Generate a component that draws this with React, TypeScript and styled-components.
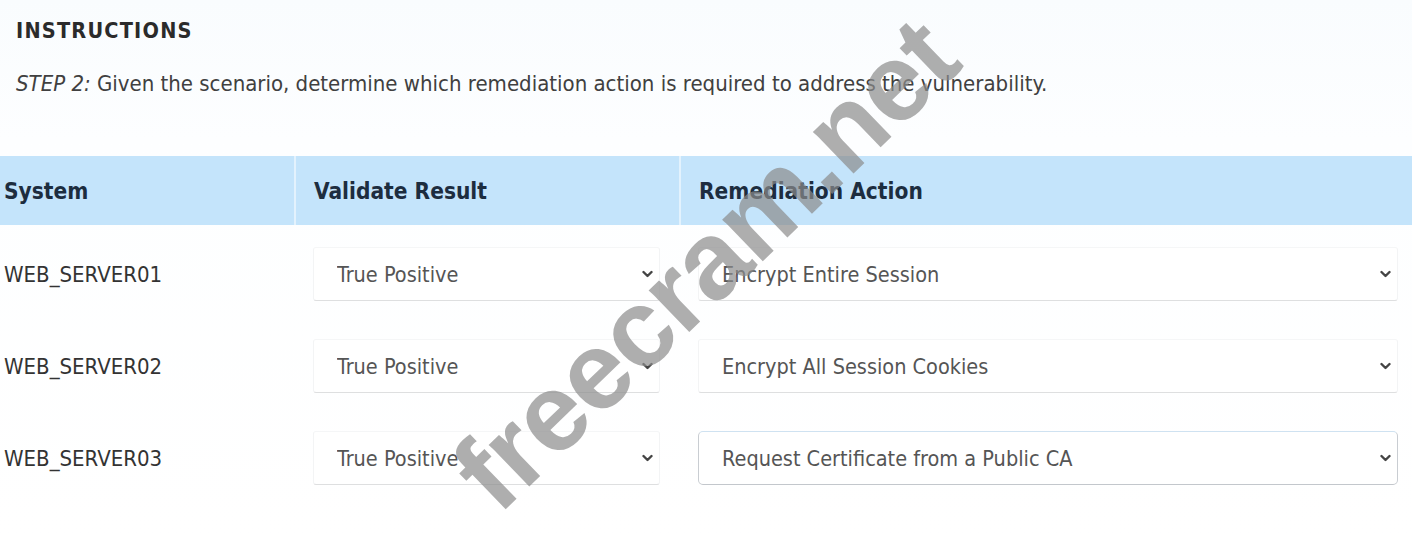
import React from "react";
import styled, { createGlobalStyle } from "styled-components";

const GlobalStyle = createGlobalStyle`
  html, body {
    margin: 0;
    padding: 0;
    background: #fcfdfe;
  }
  body {
    font-family: "DejaVu Sans Condensed", "Liberation Sans Narrow", "Liberation Sans", sans-serif;
    color: #333;
  }
  * { box-sizing: border-box; }
`;

const Page = styled.div`
  position: relative;
  width: 1412px;
  height: 538px;
  overflow: hidden;
  background: linear-gradient(#f9fcfe, #fdfeff 140px, #ffffff);
`;

const Instructions = styled.section`
  padding: 19px 16px 0 16px;
  display: flex;
  flex-direction: column;
  gap: 28px;
`;

const Title = styled.h1`
  margin: 0;
  font-size: 21.5px;
  font-weight: bold;
  line-height: 24px;
  color: #2b2b2b;
  letter-spacing: 1.2px;
`;

const StepText = styled.p`
  margin: 0;
  font-size: 22px;
  line-height: 26px;
  color: #404040;
  em {
    font-style: italic;
  }
`;

const Table = styled.div`
  margin-top: 59px;
  display: grid;
  grid-template-columns: 294px 385px 1fr;
`;

const HeaderCell = styled.div<{ $first?: boolean }>`
  height: 69px;
  background: #c4e4fb;
  display: flex;
  align-items: center;
  padding-left: ${(p) => (p.$first ? "4px" : "18px")};
  border-left: ${(p) => (p.$first ? "none" : "2px solid #e3f2fd")};
  font-weight: bold;
  font-size: 22.5px;
  color: #1d2d3f;
`;

const Cell = styled.div<{ $first?: boolean; $right?: number }>`
  height: 92px;
  display: flex;
  align-items: center;
  padding-top: 6px;
  padding-left: ${(p) => (p.$first ? "4px" : "19px")};
  padding-right: ${(p) => (p.$right ?? 19)}px;
  font-size: 22px;
  color: #333;
`;

const SelectWrap = styled.div`
  position: relative;
  width: 100%;
  height: 54px;
`;

const Select = styled.select<{ $focused?: boolean }>`
  appearance: none;
  -webkit-appearance: none;
  width: 100%;
  height: 100%;
  padding: 0 40px 0 23px;
  font-family: inherit;
  font-size: 21.5px;
  color: #555;
  background: #ffffff;
  border: 1px solid ${(p) => (p.$focused ? "#c9cdd2" : "#f3f4f5")};
  border-top-color: ${(p) => (p.$focused ? "#cfe2f1" : "#f5f6f7")};
  border-bottom-color: ${(p) => (p.$focused ? "#c3c7cc" : "#dedfe0")};
  border-radius: ${(p) => (p.$focused ? "5px" : "3px")};
  outline: none;
`;

const Chevron = styled.svg`
  position: absolute;
  right: 7px;
  top: 50%;
  transform: translateY(-50%);
  pointer-events: none;
`;

const Watermark = styled.div`
  position: absolute;
  left: 705px;
  top: 264px;
  transform: translate(-50%, -50%) rotate(-44deg);
  font-family: "Liberation Sans", Arial, sans-serif;
  font-weight: bold;
  font-size: 110px;
  line-height: 1;
  color: rgba(140, 140, 140, 0.7);
  white-space: nowrap;
  pointer-events: none;
  letter-spacing: -1px;
`;

const ChevronIcon = () => (
  <Chevron width="11" height="8" viewBox="0 0 11 8">
    <path d="M1.5 2 L5.5 6 L9.5 2" fill="none" stroke="#444" strokeWidth="2.4" strokeLinecap="round" strokeLinejoin="round" />
  </Chevron>
);

const Dropdown = ({ value, focused }: { value: string; focused?: boolean }) => (
  <SelectWrap>
    <Select $focused={focused} defaultValue={value}>
      <option value={value}>{value}</option>
    </Select>
    <ChevronIcon />
  </SelectWrap>
);

const rows = [
  { system: "WEB_SERVER01", result: "True Positive", action: "Encrypt Entire Session" },
  { system: "WEB_SERVER02", result: "True Positive", action: "Encrypt All Session Cookies" },
  { system: "WEB_SERVER03", result: "True Positive", action: "Request Certificate from a Public CA", focused: true },
];

export default function App() {
  return (
    <>
      <GlobalStyle />
      <Page>
        <Instructions>
          <Title>INSTRUCTIONS</Title>
          <StepText>
            <em>STEP 2:</em> Given the scenario, determine which remediation action is required to address the vulnerability.
          </StepText>
        </Instructions>
        <Table>
          <HeaderCell $first>System</HeaderCell>
          <HeaderCell>Validate Result</HeaderCell>
          <HeaderCell>Remediation Action</HeaderCell>
          {rows.map((r) => (
            <React.Fragment key={r.system}>
              <Cell $first>{r.system}</Cell>
              <Cell>
                <Dropdown value={r.result} />
              </Cell>
              <Cell $right={14}>
                <Dropdown value={r.action} focused={r.focused} />
              </Cell>
            </React.Fragment>
          ))}
        </Table>
        <Watermark>freecram.net</Watermark>
      </Page>
    </>
  );
}
